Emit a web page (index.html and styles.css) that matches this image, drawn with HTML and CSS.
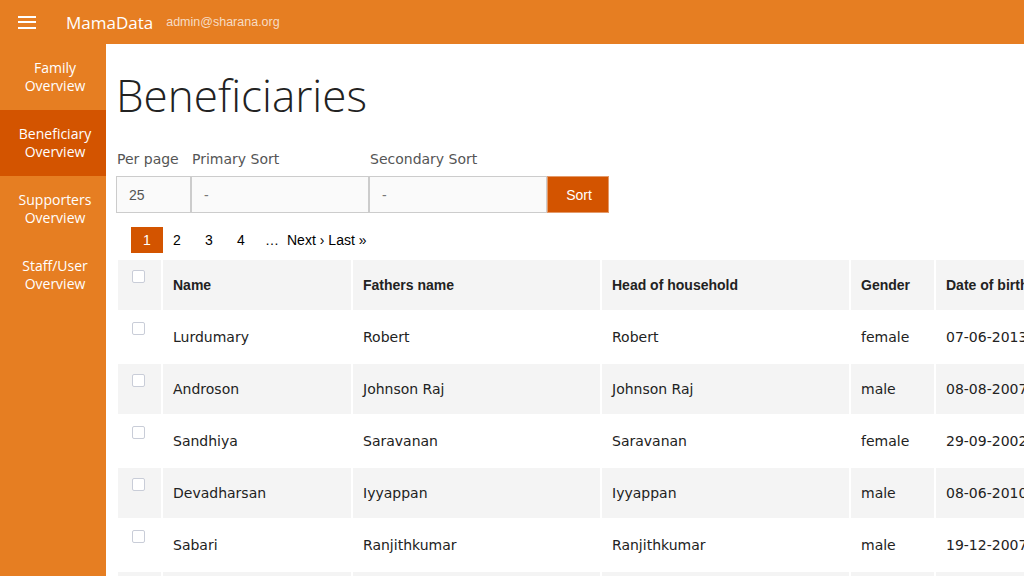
FILE: index.html
```html
<!DOCTYPE html>
<html>
<head>
<meta charset="utf-8">
<title>Beneficiaries - MamaData</title>
<link rel="stylesheet" href="styles.css">
</head>
<body>
<header class="topbar">
  <span class="burger"><span></span><span></span><span></span></span>
  <span class="brand">MamaData</span>
  <span class="user">admin@sharana.org</span>
</header>
<div class="layout">
  <nav class="sidebar">
    <a class="nav-item">Family<br>Overview</a>
    <a class="nav-item active">Beneficiary<br>Overview</a>
    <a class="nav-item">Supporters<br>Overview</a>
    <a class="nav-item">Staff/User<br>Overview</a>
  </nav>
  <main class="main">
    <h1 class="title">Beneficiaries</h1>
    <form class="sort-form">
      <div class="field f-per">
        <label class="lbl">Per page</label>
        <div class="box">25</div>
      </div>
      <div class="field f-pri">
        <label class="lbl">Primary Sort</label>
        <div class="box dash">-</div>
      </div>
      <div class="field f-sec">
        <label class="lbl">Secondary Sort</label>
        <div class="box dash">-</div>
      </div>
      <div class="field f-btn">
        <span class="lbl">&nbsp;</span>
        <button type="button" class="sort-btn">Sort</button>
      </div>
    </form>
    <div class="pager">
      <span class="pg current">1</span>
      <span class="pg">2</span>
      <span class="pg">3</span>
      <span class="pg">4</span>
      <span class="pg-ell">…</span>
      <span class="pg-link">Next ›</span>
      <span class="pg-link">Last »</span>
    </div>
    <table class="grid">
      <colgroup>
        <col class="c-chk"><col class="c-name"><col class="c-fath"><col class="c-head"><col class="c-gen"><col class="c-dob"><col class="c-more">
      </colgroup>
      <thead>
        <tr><th class="chk"><span class="cb"></span></th><th>Name</th><th>Fathers name</th><th>Head of household</th><th>Gender</th><th>Date of birth</th><th>Village</th></tr>
      </thead>
      <tbody>
        <tr><td class="chk"><span class="cb"></span></td><td>Lurdumary</td><td>Robert</td><td>Robert</td><td>female</td><td>07-06-2013</td><td></td></tr>
        <tr class="alt"><td class="chk"><span class="cb"></span></td><td>Androson</td><td>Johnson Raj</td><td>Johnson Raj</td><td>male</td><td>08-08-2007</td><td></td></tr>
        <tr><td class="chk"><span class="cb"></span></td><td>Sandhiya</td><td>Saravanan</td><td>Saravanan</td><td>female</td><td>29-09-2002</td><td></td></tr>
        <tr class="alt"><td class="chk"><span class="cb"></span></td><td>Devadharsan</td><td>Iyyappan</td><td>Iyyappan</td><td>male</td><td>08-06-2010</td><td></td></tr>
        <tr><td class="chk"><span class="cb"></span></td><td>Sabari</td><td>Ranjithkumar</td><td>Ranjithkumar</td><td>male</td><td>19-12-2007</td><td></td></tr>
        <tr class="alt"><td class="chk"><span class="cb"></span></td><td>Priya</td><td>Murugan</td><td>Murugan</td><td>female</td><td>11-03-2009</td><td></td></tr>
      </tbody>
    </table>
  </main>
</div>
</body>
</html>
```
FILE: styles.css
```css
html, body {
  margin: 0;
  padding: 0;
  height: 100%;
  overflow: hidden;
  background: #fff;
}
body {
  font-family: "DejaVu Sans", sans-serif;
  color: #222;
}
.topbar {
  height: 44px;
  background: #e67e22;
  display: flex;
  align-items: center;
  color: #fff;
}
.burger {
  display: flex;
  flex-direction: column;
  justify-content: space-between;
  width: 18px;
  height: 13px;
  margin-left: 18px;
  margin-right: 30px;
}
.burger span {
  display: block;
  height: 2px;
  background: #fff;
}
.brand {
  font-family: "Open Sans", sans-serif;
  font-size: 17px;
  margin-right: 13px;
}
.user {
  font-family: "Liberation Sans", sans-serif;
  font-size: 12.5px;
  color: #f6dcc4;
}
.layout {
  display: flex;
  height: calc(100% - 44px);
}
.sidebar {
  width: 106px;
  flex: none;
  background: #e67e22;
  display: flex;
  flex-direction: column;
}
.nav-item {
  height: 66px;
  display: flex;
  align-items: center;
  justify-content: center;
  text-align: center;
  font-family: "Open Sans", sans-serif;
  font-size: 14px;
  line-height: 18px;
  color: #fff;
  padding-left: 4px;
}
.nav-item.active {
  background: #d35400;
}
.main {
  flex: 1;
  min-width: 0;
  overflow: hidden;
  padding-left: 10px;
}
.title {
  font-family: "Open Sans", sans-serif;
  font-weight: 300;
  font-size: 44px;
  line-height: 1;
  margin: 29px 0 0 0;
  color: #222;
}
.sort-form {
  display: flex;
  margin-top: 34px;
}
.field {
  display: flex;
  flex-direction: column;
}
.lbl {
  font-family: "DejaVu Sans", sans-serif;
  font-size: 14px;
  color: #555;
  line-height: 17px;
  height: 17px;
  margin-bottom: 8px;
  padding-left: 1px;
  white-space: nowrap;
}
.box {
  height: 35px;
  border: 1px solid #ccc;
  background: #fafafa;
  font-family: "Liberation Sans", sans-serif;
  font-size: 14px;
  color: #555;
  display: flex;
  align-items: center;
  padding-left: 12px;
  box-sizing: content-box;
}
.f-per .box { width: 61px; }
.f-pri .box { width: 164px; padding-left: 12px; }
.f-sec .box { width: 164px; }
.box.dash { color: #777; }
.sort-btn {
  width: 62px;
  height: 37px;
  background: #d35400;
  border: 1px solid #e49a6a;
  color: #fff;
  font-family: "Liberation Sans", sans-serif;
  font-size: 14px;
  padding: 0 0 0 2px;
}
.pager {
  display: flex;
  align-items: center;
  margin: 14px 0 0 15px;
  height: 26px;
  font-family: "Liberation Sans", sans-serif;
  font-size: 14px;
  color: #000;
}
.pg {
  width: 32px;
  height: 26px;
  display: flex;
  align-items: center;
  justify-content: center;
  box-sizing: border-box;
  padding-right: 4px;
}
.pg.current {
  background: #d35400;
  color: #fff;
  padding-right: 0;
}
.pg-ell {
  padding: 0 8px 0 6px;
}
.pg-link {
  margin-right: 4px;
}
.grid {
  table-layout: fixed;
  border-collapse: separate;
  border-spacing: 2px;
  width: 1164px;
  margin-top: 5px;
}
.c-chk { width: 43px; }
.c-name { width: 188px; }
.c-fath { width: 247px; }
.c-head { width: 247px; }
.c-gen { width: 83px; }
.c-dob { width: 140px; }
.c-more { width: 200px; }
.grid th, .grid td {
  height: 50px;
  padding: 0 10px;
  text-align: left;
  vertical-align: middle;
  white-space: nowrap;
  overflow: hidden;
  box-sizing: border-box;
}
.grid th {
  background: #f4f4f4;
  font-family: "Liberation Sans", sans-serif;
  font-weight: bold;
  font-size: 14px;
  color: #222;
}
.grid td {
  font-family: "DejaVu Sans", sans-serif;
  font-size: 14px;
  color: #222;
}
.grid tr.alt td { background: #f4f4f4; }
.grid .chk {
  vertical-align: top;
  padding: 10px 0 0 14px;
}
.cb {
  display: block;
  width: 11px;
  height: 11px;
  border: 1px solid #c9cdd8;
  border-radius: 2px;
  background: #fff;
}
```
